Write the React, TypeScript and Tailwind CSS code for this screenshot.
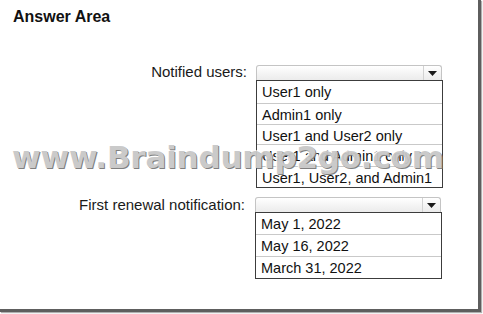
import React from "react";

type Opt = { text: string; h: string };

function Dropdown({ options }: { options: Opt[] }) {
  return (
    <div className="flex flex-col">
      <div className="relative flex h-[15px] w-[186px] rounded-t-[3px] border border-b-0 border-[#c4c4c4] bg-gradient-to-b from-[#ffffff] to-[#ebebeb]">
        <div className="flex-1" />
        <div className="flex w-[18px] items-center justify-center border-l border-[#d2d2d2]">
          <svg width="9" height="5" viewBox="0 0 9 5">
            <path d="M0 0 H9 L4.5 5 Z" fill="#1a1a1a" />
          </svg>
        </div>
      </div>
      <div className="flex w-[187px] flex-col border border-[#3c3c3c] bg-white">
        {options.map((o, i) => (
          <div
            key={o.text}
            className={`${o.h} ${i < options.length - 1 ? "border-b border-[#c9c9c9]" : ""} overflow-hidden whitespace-nowrap pl-[5px] pt-[2px] text-[14.5px] leading-[19px] text-[#111]`}
          >
            {o.text}
          </div>
        ))}
      </div>
    </div>
  );
}

export default function App() {
  return (
    <div
      className="h-[314px] w-[483px] bg-white"
      style={{ fontFamily: '"Liberation Sans", Arial, sans-serif' }}
    >
      <div className="relative h-[312px] w-[481px] border-b-[3px] border-r-[3px] border-[#5e5e5e] bg-white pt-[7px] shadow-[1px_1px_1px_#b0b0b0]">
        <div className="pl-[13px] text-[16px] font-bold leading-[20px] text-[#111]">Answer Area</div>

        <div className="mt-[37px] flex items-start">
          <div className="w-[248px] pr-[1px] text-right text-[15px] leading-[15px] text-[#1a1a1a]">Notified users:</div>
          <div className="ml-[8px] mt-[1px]">
            <Dropdown
              options={[
                { text: "User1 only", h: "h-[23px]" },
                { text: "Admin1 only", h: "h-[21px]" },
                { text: "User1 and User2 only", h: "h-[20px]" },
                { text: "User1 and Admin1 only", h: "h-[22px]" },
                { text: "User1, User2, and Admin1", h: "h-[20px]" },
              ]}
            />
          </div>
        </div>

        <div className="mt-[8px] flex items-start">
          <div className="mt-[1px] w-[248px] pr-[3px] text-right text-[15px] leading-[15px] text-[#1a1a1a]">
            First renewal notification:
          </div>
          <div className="ml-[7px] mt-[1px]">
            <Dropdown
              options={[
                { text: "May 1, 2022", h: "h-[22px]" },
                { text: "May 16, 2022", h: "h-[22px]" },
                { text: "March 31, 2022", h: "h-[21px]" },
              ]}
            />
          </div>
        </div>

        <div
          className="pointer-events-none absolute left-[12px] top-[142px] whitespace-nowrap text-[31px] font-bold leading-[31px] tracking-[-0.2px] text-[#c8c8c8] opacity-95 [text-shadow:1px_1px_0_#7a7a7a,-1px_-1px_0_#ffffff]"
          style={{ fontFamily: '"DejaVu Sans", Verdana, sans-serif' }}
        >
          www.Braindump2go.com
        </div>
      </div>
    </div>
  );
}
